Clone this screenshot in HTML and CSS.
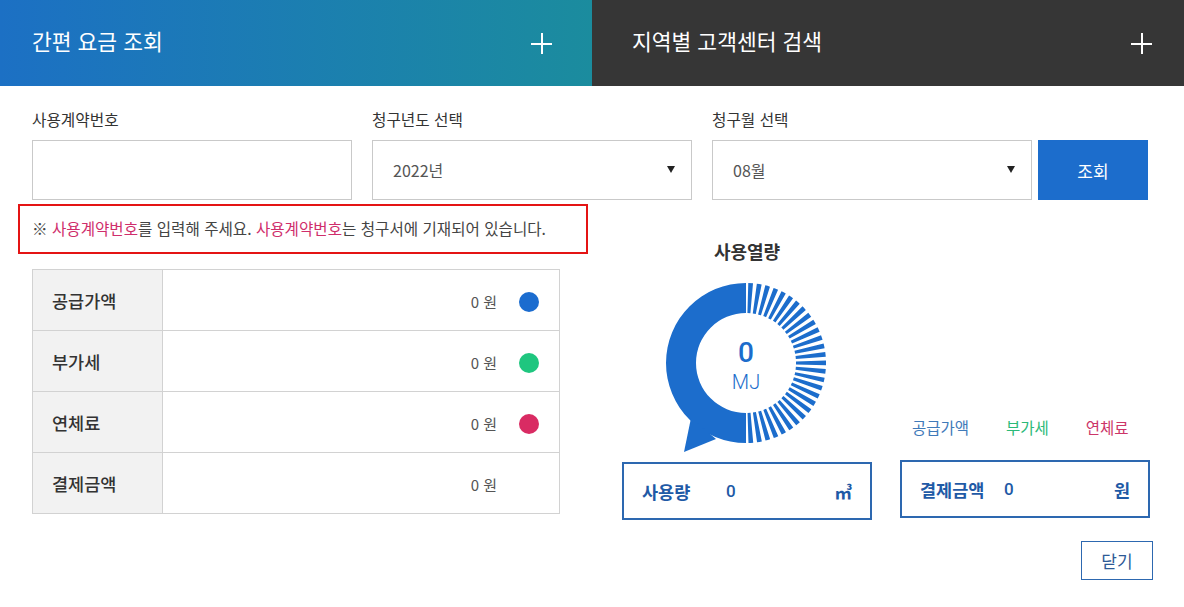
FILE: index.html
```html
<!DOCTYPE html>
<html lang="ko">
  <head>
    <meta charset="UTF-8" />
    <meta name="viewport" content="width=device-width, initial-scale=1.0" />
    <title>간편 요금 조회</title>
    <link rel="stylesheet" href="styles.css">
  </head>
  <body>
    <div class="tabs">
      <div class="tab tab-blue">
        <h2>간편 요금 조회</h2>
        <span class="plus"></span>
      </div>
      <div class="tab tab-dark">
        <h2>지역별 고객센터 검색</h2>
        <span class="plus"></span>
      </div>
    </div>

    <div class="panel">
      <div class="form-row">
        <div class="field">
          <label>사용계약번호</label>
          <input type="text" class="input" />
        </div>
        <div class="field">
          <label>청구년도 선택</label>
          <div class="select">2022년<span class="arrow"></span></div>
        </div>
        <div class="field">
          <label>청구월 선택</label>
          <div class="select">08월<span class="arrow"></span></div>
        </div>
        <button class="search-btn">조회</button>
      </div>

      <div class="result">
        <div class="result-left">
          <p class="notice">※ <em>사용계약번호</em>를 입력해 주세요. <em>사용계약번호</em>는 청구서에 기재되어 있습니다.</p>
          <table class="fee-table">
            <tr>
              <th>공급가액</th>
              <td><span class="val">0 원</span><span class="dot blue"></span></td>
            </tr>
            <tr>
              <th>부가세</th>
              <td><span class="val">0 원</span><span class="dot green"></span></td>
            </tr>
            <tr>
              <th>연체료</th>
              <td><span class="val">0 원</span><span class="dot pink"></span></td>
            </tr>
            <tr>
              <th>결제금액</th>
              <td><span class="val">0 원</span><span class="dot"></span></td>
            </tr>
          </table>
        </div>

        <div class="gauge-col">
          <h3>사용열량</h3>
          <svg class="gauge" width="170" height="180" viewBox="0 0 170 180">
            <!-- 왼쪽 반원 + 말풍선 꼬리 -->
            <path d="M84,5 A80,80 0 0 0 84,165 L84,135 A50,50 0 0 1 84,35 Z" fill="#1c6dcc" />
            <polygon points="22,174 29,140 54,161" fill="#1c6dcc" />
            <!-- 오른쪽 눈금 -->
            <path d="M84,20 A65,65 0 0 1 84,150" fill="none" stroke="#1c6dcc" stroke-width="30"
              stroke-dasharray="3.9 3.1" stroke-dashoffset="-1.9" />
            <text x="84" y="84" class="g-num" text-anchor="middle">0</text>
            <text x="84" y="111" class="g-unit" text-anchor="middle">MJ</text>
          </svg>
          <div class="sum-box">
            <span class="sum-label">사용량</span>
            <span class="sum-num">0</span>
            <span class="sum-unit">㎥</span>
          </div>
        </div>

        <div class="pay-col">
          <div class="legend">
            <span class="lg-blue">공급가액</span>
            <span class="lg-green">부가세</span>
            <span class="lg-pink">연체료</span>
          </div>
          <div class="sum-box">
            <span class="sum-label">결제금액</span>
            <span class="sum-num">0</span>
            <span class="sum-unit">원</span>
          </div>
        </div>
      </div>

      <div class="footer">
        <button class="close-btn">닫기</button>
      </div>
    </div>
  </body>
</html>
```

FILE: styles.css
```css
body {
  margin: 0;
  padding: 0;
  font-family: "Noto Sans CJK KR", "Noto Sans", sans-serif;
  background-color: #fff;
  color: #333;
}

/* 상단 탭 */
.tabs {
  display: flex;
  height: 86px;
}
.tab {
  flex: 1;
  display: flex;
  align-items: center;
  justify-content: space-between;
  color: white;
}
.tab h2 {
  margin: 0;
  font-size: 21.5px;
  font-weight: 400;
  line-height: 1;
  padding-bottom: 4px;
}
.tab-blue {
  background: linear-gradient(90deg, #1c70c4 0%, #1b8c9e 100%);
  padding: 0 40px 0 32px;
}
.tab-dark {
  background-color: #363636;
  padding: 0 32px 0 40px;
}
.plus {
  position: relative;
  width: 21px;
  height: 21px;
}
.plus::before,
.plus::after {
  content: "";
  position: absolute;
  background-color: white;
}
.plus::before {
  left: 0;
  right: 0;
  top: 10px;
  height: 2px;
}
.plus::after {
  top: 0;
  bottom: 0;
  left: 10px;
  width: 2px;
}

.panel {
  padding: 0 32px;
}

/* 조회 폼 */
.form-row {
  display: flex;
  align-items: flex-end;
  padding-top: 24px;
}
.field {
  width: 320px;
  margin-right: 20px;
  display: flex;
  flex-direction: column;
}
.field:nth-child(3) {
  margin-right: 6px;
}
.field label {
  font-size: 15.7px;
  line-height: 20px;
  margin-bottom: 10px;
  color: #333;
}
.input,
.select {
  box-sizing: border-box;
  height: 60px;
  border: 1px solid #c9c9c9;
  background: #fff;
  margin: 0;
}
.select {
  display: flex;
  align-items: center;
  justify-content: space-between;
  padding: 0 16px 0 20px;
  font-size: 16px;
  color: #555;
}
.arrow {
  width: 0;
  height: 0;
  border-left: 4px solid transparent;
  border-right: 4px solid transparent;
  border-top: 7px solid #222;
  margin-top: -2px;
}
.search-btn {
  width: 110px;
  height: 60px;
  border: none;
  background-color: #1c6dcc;
  color: white;
  font-family: inherit;
  font-size: 17px;
  cursor: pointer;
}

/* 결과 영역 */
.result {
  display: flex;
  margin-top: 4px;
}
.result-left {
  margin-left: -14px;
  width: 570px;
}
.notice {
  box-sizing: border-box;
  margin: 0;
  height: 50px;
  border: 2px solid #e41414;
  padding: 0 12px;
  font-size: 15.6px;
  line-height: 45px;
  color: #444;
  white-space: nowrap;
}
.notice em {
  font-style: normal;
  color: #cf2e6b;
}

.fee-table {
  margin: 15px 0 0 14px;
  width: 528px;
  border-collapse: collapse;
}
.fee-table th,
.fee-table td {
  border: 1px solid #d2d2d2;
  height: 60px;
  padding: 0;
}
.fee-table th {
  width: 110px;
  background-color: #f2f2f2;
  text-align: left;
  padding-left: 19px;
  font-size: 17.5px;
  font-weight: 500;
  color: #333;
}
.fee-table td {
  text-align: right;
  padding-right: 20px;
}
.val {
  font-size: 15px;
  color: #555;
  vertical-align: middle;
}
.dot {
  display: inline-block;
  width: 20px;
  height: 20px;
  border-radius: 50%;
  margin-left: 22px;
  vertical-align: middle;
}
.dot.blue {
  background-color: #1b6ccf;
}
.dot.green {
  background-color: #1fc67f;
}
.dot.pink {
  background-color: #d92b63;
}

/* 사용열량 그래프 */
.gauge-col {
  width: 250px;
  margin-left: 34px;
  display: flex;
  flex-direction: column;
  align-items: center;
}
.gauge-col h3 {
  margin: 37px 0 0;
  font-size: 18px;
  line-height: 20px;
  font-weight: 700;
  color: #333;
}
.gauge {
  display: block;
  margin-top: 17px;
}
.g-num {
  font-family: Roboto, sans-serif;
  font-size: 28px;
  font-weight: 500;
  fill: #1c6dcc;
}
.g-unit {
  font-family: Roboto, sans-serif;
  font-size: 20px;
  font-weight: 300;
  fill: #1c6dcc;
}

.sum-box {
  box-sizing: border-box;
  width: 250px;
  height: 58px;
  border: 2px solid #2d68b0;
  display: flex;
  align-items: center;
  padding: 0 18px;
  color: #1f5aa6;
  margin-top: 4px;
}
.sum-label {
  width: 84px;
  font-size: 17.5px;
  font-weight: 700;
}
.sum-num {
  flex: 1;
  font-family: Roboto, sans-serif;
  font-size: 17px;
  font-weight: 500;
}
.sum-unit {
  font-size: 17.5px;
  font-weight: 700;
}

.pay-col {
  margin-left: 28px;
  align-self: flex-end;
  margin-bottom: 2px;
}
.pay-col .sum-box {
  margin-top: 23px;
}
.legend {
  display: flex;
  gap: 37px;
  padding-left: 12px;
  font-size: 15.5px;
  line-height: 20px;
}
.lg-blue {
  color: #3f7ab9;
}
.lg-green {
  color: #2cb978;
}
.lg-pink {
  color: #cc3568;
}

.footer {
  display: flex;
  justify-content: flex-end;
  margin-top: 21px;
  margin-right: -1px;
}
.close-btn {
  width: 72px;
  height: 39px;
  background: #fff;
  border: 1px solid #2d68b0;
  color: #2d5a96;
  font-family: inherit;
  font-size: 17px;
  cursor: pointer;
}
```
